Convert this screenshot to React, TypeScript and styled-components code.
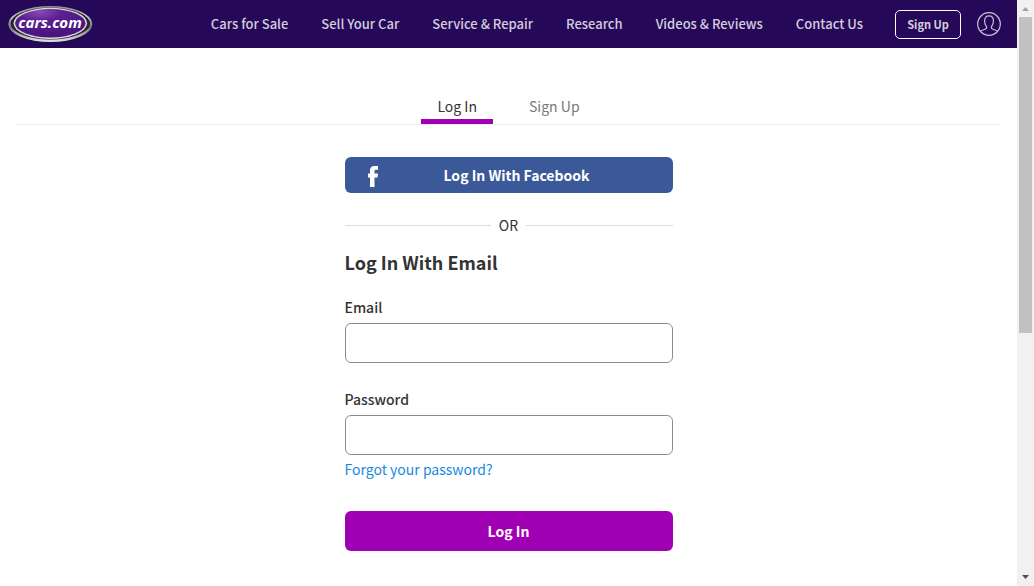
import React from 'react';
import styled, { createGlobalStyle } from 'styled-components';

const GlobalStyle = createGlobalStyle`
  *, *::before, *::after { box-sizing: border-box; }
  body {
    margin: 0;
    background: #fff;
    color: #333;
    font-family: "Noto Sans CJK SC", "Open Sans", sans-serif;
    font-size: 14px;
    line-height: 24px;
  }
  button, input { font: inherit; }
`;

const Shell = styled.div`
  display: grid;
  grid-template-columns: minmax(0, 1fr) 17px;
  min-height: 100vh;
`;

const Header = styled.header`
  display: flex;
  align-items: center;
  justify-content: space-between;
  height: 48px;
  padding: 0 16px 0 8px;
  background: #250858;
`;

const LogoLink = styled.a`
  display: flex;
`;

const HeaderEnd = styled.div`
  display: flex;
  align-items: center;
  gap: 16px;
`;

const Nav = styled.nav`
  display: flex;
  gap: 33px;
  margin-right: 16px;
`;

const NavLink = styled.a`
  color: #d3cede;
  font-size: 13px;
  font-weight: 500;
  text-decoration: none;
  white-space: nowrap;
`;

const SignUpButton = styled.button`
  width: 66px;
  height: 29px;
  padding: 0;
  border: 1px solid #fff;
  border-radius: 5px;
  background: transparent;
  color: #d3cede;
  font-size: 11px;
  font-weight: 700;
`;

const ProfileButton = styled.button`
  display: flex;
  padding: 0;
  border: 0;
  background: transparent;
`;

const Tabs = styled.div`
  display: flex;
  justify-content: center;
  gap: 20px;
  margin: 46px 16px 32px;
  border-bottom: 1px solid #f0f0f0;
`;

const Tab = styled.button<{ $active?: boolean }>`
  padding: 0 16px;
  border: 0;
  border-bottom: 5px solid ${(p) => (p.$active ? '#a000b4' : 'transparent')};
  background: transparent;
  color: ${(p) => (p.$active ? '#333' : '#777')};
  line-height: 25px;
`;

const Form = styled.form`
  display: flex;
  flex-direction: column;
  width: 100%;
  max-width: 328px;
  margin: 0 auto 32px;
`;

const ActionButton = styled.button`
  height: 40px;
  border: 0;
  border-radius: 6px;
  background: #a000b4;
  color: #fff;
  font-weight: 700;
`;

const FacebookButton = styled(ActionButton)`
  display: grid;
  grid-template-columns: 24px 1fr;
  align-items: center;
  height: 36px;
  padding: 0 24px 0 16px;
  background: #3b5998;
`;

const Divider = styled.div`
  display: flex;
  align-items: center;
  gap: 8px;
  margin: 22px 0 12px;
  line-height: 20px;

  &::before, &::after {
    content: '';
    flex: 1;
    height: 1px;
    background: #ddd;
  }
`;

const Heading = styled.h1`
  margin: 0 0 18px;
  font-size: 18px;
  font-weight: 700;
  line-height: 30px;
`;

const Field = styled.div`
  display: flex;
  flex-direction: column;
  gap: 4px;

  & + & {
    margin-top: 24px;
  }
`;

const Label = styled.label`
  font-weight: 500;
`;

const Input = styled.input`
  width: 100%;
  height: 40px;
  margin: 0;
  padding: 0 12px;
  border: 1px solid #8c8c8c;
  border-radius: 6px;
  background: #fff;
`;

const ForgotLink = styled.a`
  align-self: flex-start;
  margin: 2px 0 30px;
  color: #1589e0;
  text-decoration: none;
`;

const ScrollBar = styled.div`
  position: sticky;
  top: 0;
  display: flex;
  flex-direction: column;
  align-items: center;
  height: 100vh;
  background: #f1f1f1;
`;

const ScrollThumb = styled.div`
  flex: 0 0 54%;
  width: 13px;
  background: #c1c1c1;
`;

const ScrollArrow = styled.svg`
  flex: none;
  width: 17px;
  height: 17px;
`;

const ScrollSpace = styled.div`
  flex: 1;
`;

const navItems = [
  'Cars for Sale',
  'Sell Your Car',
  'Service & Repair',
  'Research',
  'Videos & Reviews',
  'Contact Us',
];

function Logo() {
  return (
    <svg width="85" height="36" viewBox="0 0 85 36" role="img" aria-label="cars.com">
      <defs>
        <linearGradient id="rim" x1="0" y1="0" x2="0" y2="1">
          <stop offset="0" stopColor="#8d8b90" />
          <stop offset="0.3" stopColor="#c9c8ca" />
          <stop offset="0.6" stopColor="#77757c" />
          <stop offset="1" stopColor="#e6e5e7" />
        </linearGradient>
        <radialGradient id="face" cx="0.35" cy="0.1" r="0.8">
          <stop offset="0" stopColor="#8a4bb4" />
          <stop offset="0.4" stopColor="#5c1f90" />
          <stop offset="1" stopColor="#4a1580" />
        </radialGradient>
      </defs>
      <ellipse cx="42.300" cy="18" rx="42" ry="18" fill="url(#rim)" />
      <ellipse cx="42.300" cy="17.500" rx="39.800" ry="16" fill="#29212f" />
      <ellipse cx="42.300" cy="17.300" rx="36.800" ry="15.600" fill="#dad8dc" />
      <ellipse cx="42.300" cy="17.300" rx="35.200" ry="14.200" fill="url(#face)" />
      <text
        x="42"
        y="22"
        textAnchor="middle"
        fill="#fff"
        fontFamily='"Open Sans", sans-serif'
        fontSize="15"
        fontStyle="italic"
        fontWeight="700"
      >
        cars.com
      </text>
    </svg>
  );
}

function ProfileIcon() {
  return (
    <svg width="24" height="24" viewBox="0 0 24 24" fill="none" stroke="#c9c1d6" strokeWidth="1.2" aria-hidden="true">
      <circle cx="12" cy="12" r="11.3" />
      <path d="M3.300 19.400C4.500 18.200 7 17.700 8.900 16.700C10 16.100 9.800 15 9.200 14C8 12.600 7.600 11 7.600 8.700C7.600 5.500 9.300 3.800 12 3.800S16.400 5.500 16.400 8.700C16.400 11 16 12.600 14.800 14C14.200 15 14 16.100 15.100 16.700C17 17.700 19.500 18.200 20.700 19.400" />
    </svg>
  );
}

function FacebookIcon() {
  return (
    <svg width="24" height="24" viewBox="0 0 24 24" fill="#fff" aria-hidden="true">
      <path d="M9 24V14.500H7V10.500H9V7.500C9 4.200 10.800 3 13.800 3H17V6.800H15.200C14 6.800 13.500 7.300 13.500 8.300V10.500H17L16.500 14.500H13.500V24Z" />
    </svg>
  );
}

export default function App() {
  return (
    <>
      <GlobalStyle />
      <Shell>
        <div>
          <Header>
            <LogoLink href="#home">
              <Logo />
            </LogoLink>
            <HeaderEnd>
              <Nav>
                {navItems.map((item) => (
                  <NavLink key={item} href="#nav">
                    {item}
                  </NavLink>
                ))}
              </Nav>
              <SignUpButton type="button">Sign Up</SignUpButton>
              <ProfileButton type="button" aria-label="Profile">
                <ProfileIcon />
              </ProfileButton>
            </HeaderEnd>
          </Header>
          <main>
            <Tabs role="tablist">
              <Tab type="button" role="tab" aria-selected="true" $active>
                Log In
              </Tab>
              <Tab type="button" role="tab" aria-selected="false">
                Sign Up
              </Tab>
            </Tabs>
            <Form onSubmit={(event) => event.preventDefault()}>
              <FacebookButton type="button">
                <FacebookIcon />
                <span>Log In With Facebook</span>
              </FacebookButton>
              <Divider>OR</Divider>
              <Heading>Log In With Email</Heading>
              <Field>
                <Label htmlFor="email">Email</Label>
                <Input id="email" type="email" />
              </Field>
              <Field>
                <Label htmlFor="password">Password</Label>
                <Input id="password" type="password" />
              </Field>
              <ForgotLink href="#forgot">Forgot your password?</ForgotLink>
              <ActionButton type="submit">Log In</ActionButton>
            </Form>
          </main>
        </div>
        <ScrollBar aria-hidden="true">
          <ScrollArrow viewBox="0 0 17 17">
            <path d="M5 11 8.500 7 12 11Z" fill="#a3a3a3" />
          </ScrollArrow>
          <ScrollThumb />
          <ScrollSpace />
          <ScrollArrow viewBox="0 0 17 17">
            <path d="M5 6 8.500 10 12 6Z" fill="#505050" />
          </ScrollArrow>
        </ScrollBar>
      </Shell>
    </>
  );
}
